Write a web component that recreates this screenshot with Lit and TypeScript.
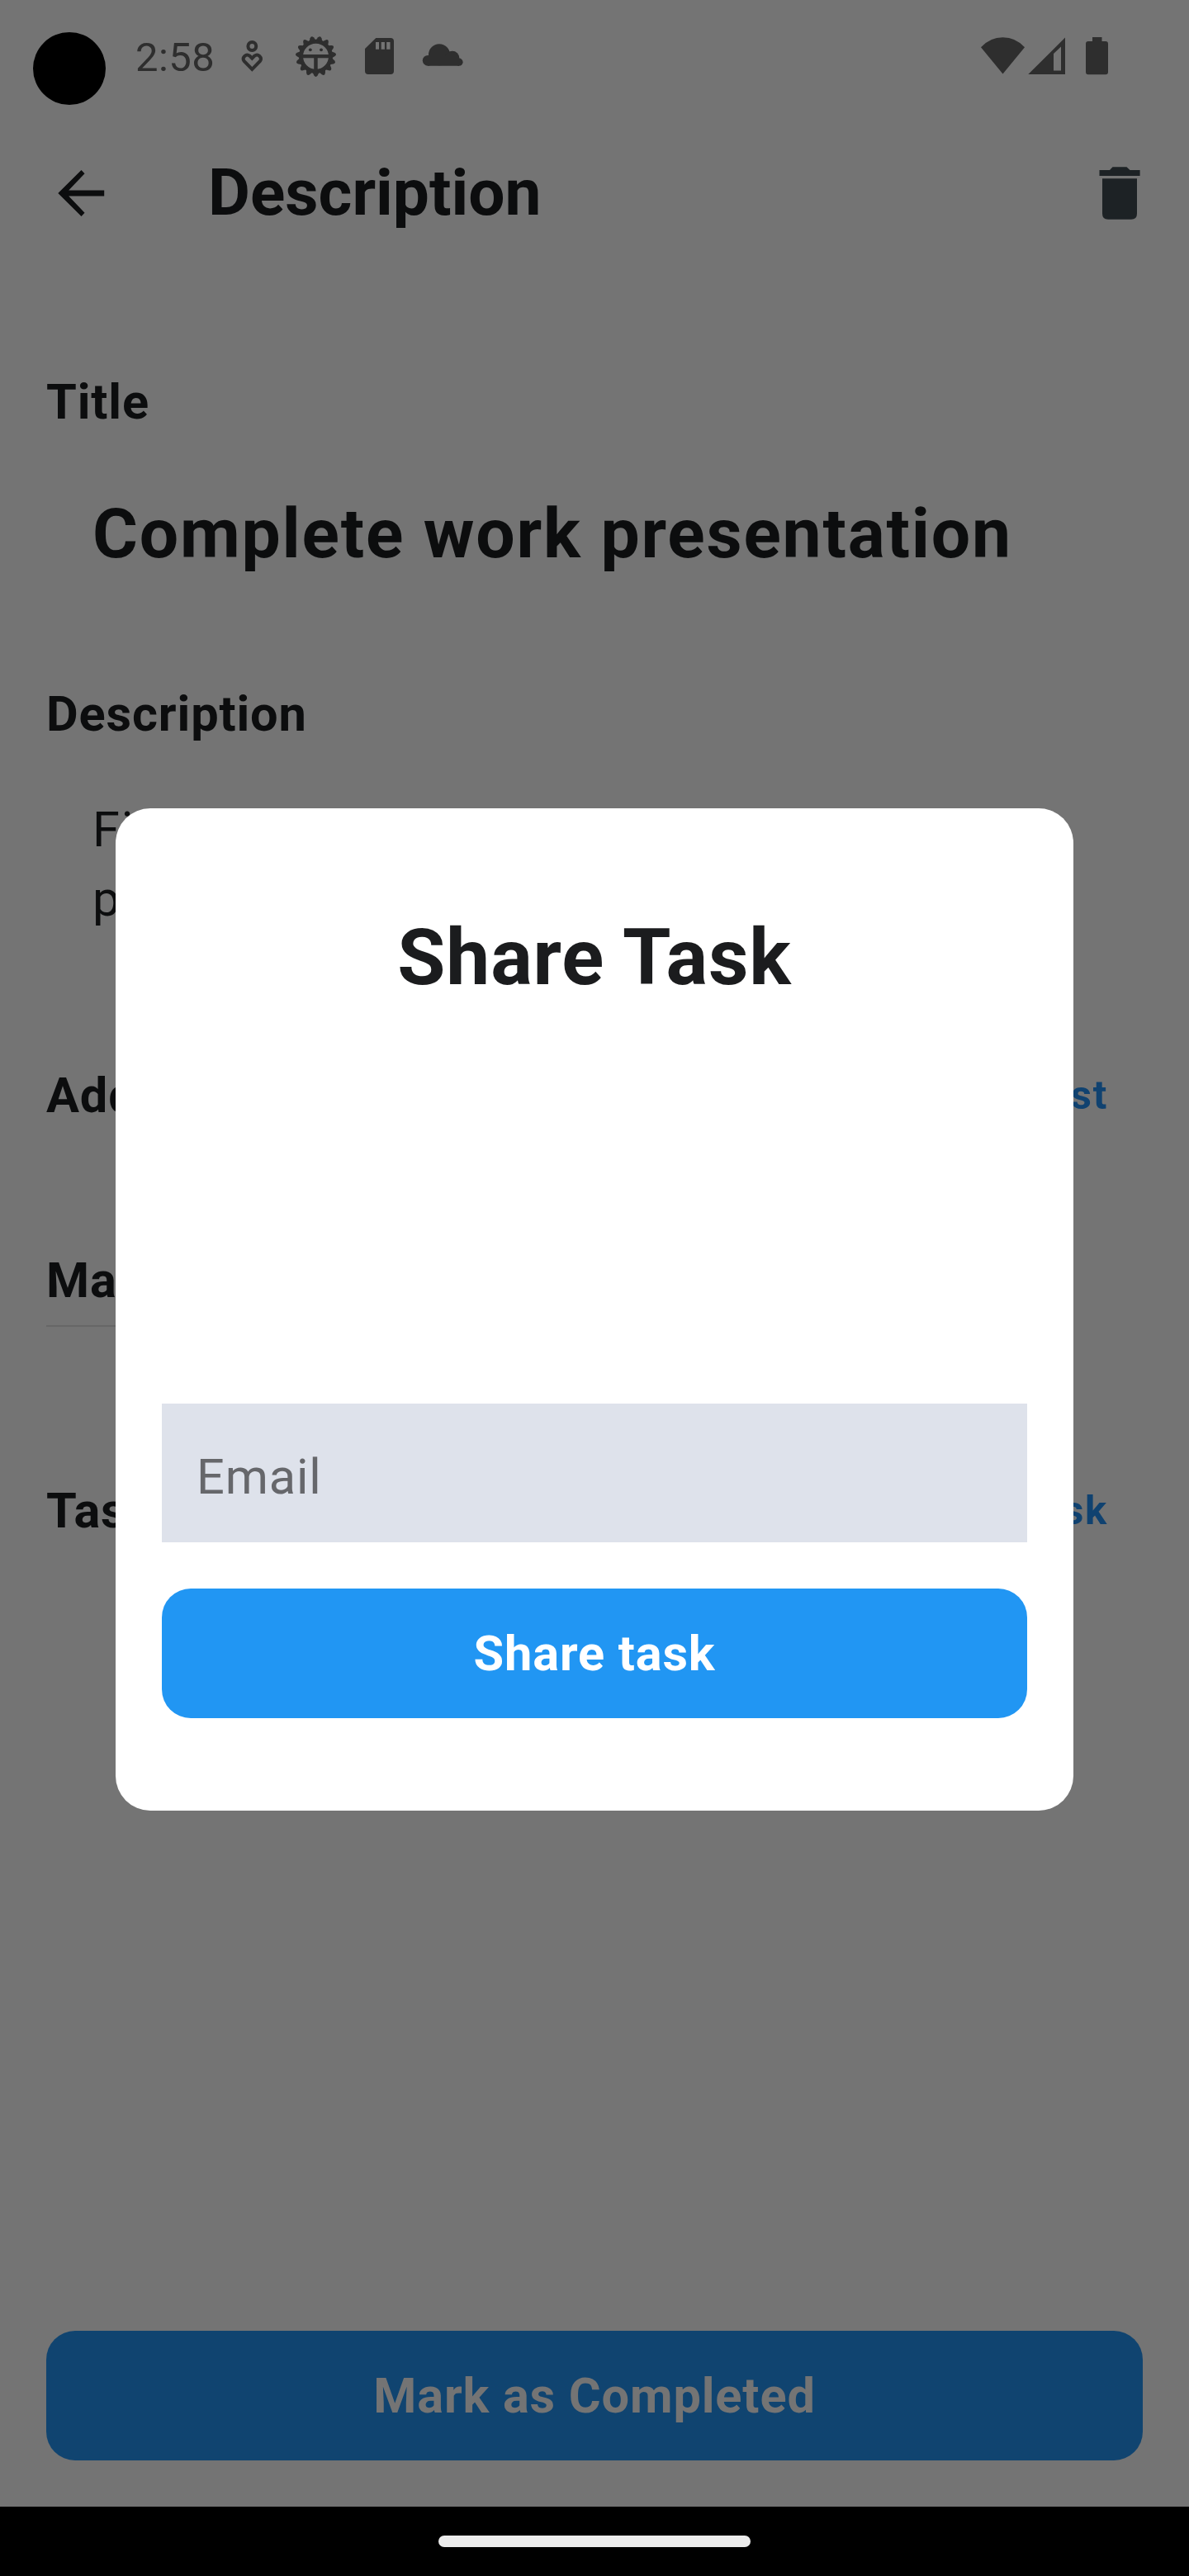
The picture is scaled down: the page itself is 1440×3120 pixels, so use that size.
import { LitElement, html, css, svg } from "lit";
import { customElement } from "lit/decorators.js";

const TEETH = Array.from({ length: 15 }, (_, i) => (i * 360) / 15 + 180);

@customElement("app-root")
export class AppRoot extends LitElement {
  static styles = css`
    :host { display: block; }
    * { box-sizing: border-box; }
    .screen {
      position: relative; width: 1440px; height: 3120px; background: #747474;
      font-family: Roboto, "Liberation Sans", sans-serif; color: #0c0d0e;
      display: flex; flex-direction: column; overflow: hidden;
    }
    svg { display: block; flex: none; fill: currentColor; }
    .status { height: 140px; flex: none; display: flex; color: #2e2e2e; align-items: flex-start; }
    .camera { width: 88px; height: 88px; border-radius: 50%; background: #000; margin: 39px 36px 0 40px; }
    .clock { width: 128px; font-size: 49px; line-height: 58px; margin-top: 41px; letter-spacing: 0.4px; }
    .left, .right { height: 64px; margin-top: 36px; }
    .right { margin-left: auto; margin-right: 80px; }
    .bar { height: 188px; flex: none; display: flex; align-items: center; padding: 0 56px 0 67px; }
    .bar h1 { margin: -2px auto 0 123px; font-size: 78.4px; line-height: 98px; font-weight: 700; }
    .trash { color: #1d2225; }
    .body { flex: 1; display: flex; flex-direction: column; padding: 0 56px; }
    .label { font-size: 59.5px; line-height: 84px; font-weight: 700; letter-spacing: 0.875px; }
    .first { margin-top: 117px; }
    .task-title { font-size: 84px; line-height: 112px; font-weight: 700; letter-spacing: 1.8px; margin: 62px 0 0 56px; }
    .second { margin-top: 120px; }
    .text { font-size: 59.5px; line-height: 84px; margin: 56px 0 0 56px; letter-spacing: 1.75px; }
    .row { display: flex; justify-content: space-between; align-items: center; padding-right: 42px; }
    .link { font-size: 49px; line-height: 70px; font-weight: 700; color: #104270; letter-spacing: 1.75px; }
    .add { margin-top: 154px; }
    .mark { margin-top: 140px; width: 700px; height: 98px; border-bottom: 2px solid #676767; }
    .tasks { margin-top: 181px; }
    .cta { height: 157.5px; padding-top: 1px; border-radius: 35px; display: flex; align-items: center; justify-content: center; font-size: 59.5px; font-weight: 700; letter-spacing: 0.875px; }
    .done { margin: auto 0 56px; background: #104470; color: #747474; }
    .nav { height: 84px; flex: none; background: #000; display: flex; justify-content: center; padding-top: 35px; }
    .pill { width: 378px; height: 14px; border-radius: 7px; background: #ececec; }
    .modal {
      position: absolute; left: 140px; top: 978.5px; width: 1160px; height: 1214.5px; border-radius: 42px;
      background: #fff; padding: 112px 56px; display: flex; flex-direction: column;
    }
    .modal h2 { margin: -1px 0 0; text-align: center; font-size: 94.5px; line-height: 140px; font-weight: 700; color: #1b1c1e; letter-spacing: 0.875px; }
    .field { margin-top: auto; height: 168px; background: #dee2eb; color: #66676b; font-size: 59.5px; line-height: 84px; padding: 47px 42px 0; letter-spacing: 0.875px; }
    .share { margin-top: 56px; background: #2196f3; color: #fff; }
  `;

  render() {
    return html`
      <div class="screen">
        <div class="status">
          <div class="camera"></div>
          <div class="clock">2:58</div>
          <svg class="left" width="280" height="64" viewBox="292 36 280 64">
            <g fill="none" stroke="currentColor" stroke-width="4">
              <circle cx="305.3" cy="56" r="4.9"></circle>
              <path d="M305.3 83.800L295.600 74A4.700 4.700 0 0 1 302.300 67.600L305.300 70.600L308.300 67.600A4.700 4.700 0 0 1 315 74Z"></path>
            </g>
            <g transform="translate(382.500 68.300)">
              <circle r="18" fill="none" stroke="currentColor" stroke-width="5"></circle>
              ${TEETH.map((a) => svg`<path transform="rotate(${a})" d="M-4.400 -18.500L-2.200 -23Q0 -26.300 2.200 -23L4.400 -18.500Z"></path>`)}
              <rect x="-17" y="-2.300" width="34" height="4.300"></rect>
              <rect x="-2.300" y="0" width="4.500" height="17"></rect>
              <circle cx="-6.700" cy="-8" r="1.900"></circle><circle cx="6.500" cy="-8" r="1.900"></circle>
            </g>
            <path fill-rule="evenodd" d="M455.300 46H473Q477 46 477 50V86Q477 90 473 90H446Q442 90 442 86V59ZM455 51V59.700H459V51ZM461.700 51V59.700H465.900V51ZM468.200 51V59.700H472.500V51Z"></path>
            <circle cx="518.2" cy="73.3" r="6.4"></circle>
            <circle cx="532" cy="66.300" r="13"></circle>
            <circle cx="547.8" cy="70.300" r="8.500"></circle>
            <circle cx="556" cy="75.200" r="4.600"></circle>
            <rect x="518" y="68" width="38" height="11.750"></rect>
          </svg>
          <svg class="right" width="180" height="64" viewBox="1180 36 180 64">
            <path d="M1188 57.300Q1199 45.300 1214.500 45.300T1241 57.300L1214.500 89.500Z"></path>
            <path fill-rule="evenodd" d="M1245.300 90L1290 45.500V90ZM1276 65V85.500H1285V56.500Z"></path>
            <path d="M1323 45H1334.500V50H1339Q1342 50 1342 53V87.300Q1342 90.300 1339 90.300H1318Q1315 90.300 1315 87.300V53Q1315 50 1318 50H1323Z"></path>
          </svg>
        </div>
        <div class="bar">
          <svg width="62" height="64" viewBox="67 202 62 64">
            <path d="M98.500 206L102.500 210.200L83.200 230.500H126.200V237.500H83.200L102.500 257.700L98.500 262L70.300 234Z"></path>
          </svg>
          <h1>Description</h1>
          <svg class="trash" width="56" height="64" viewBox="1328 202 56 64">
            <path d="M1331.500 206H1344L1347.500 202.200H1364.500L1368.500 206H1380.600V213H1331.500ZM1335 216.300H1377V258.700Q1377 265.700 1370 265.700H1342Q1335 265.700 1335 258.700Z"></path>
          </svg>
        </div>
        <div class="body">
          <div class="label first">Title</div>
          <div class="task-title">Complete work presentation</div>
          <div class="label second">Description</div>
          <div class="text">Finalize<br />presentation</div>
          <div class="row add"><span class="label">Add</span><span class="link">List</span></div>
          <div class="label mark">Mark</div>
          <div class="row tasks"><span class="label">Tasks</span><span class="link">Task</span></div>
          <div class="cta done">Mark as Completed</div>
        </div>
        <div class="nav"><div class="pill"></div></div>
        <div class="modal">
          <h2>Share Task</h2>
          <div class="field">Email</div>
          <div class="cta share">Share task</div>
        </div>
      </div>
    `;
  }
}
